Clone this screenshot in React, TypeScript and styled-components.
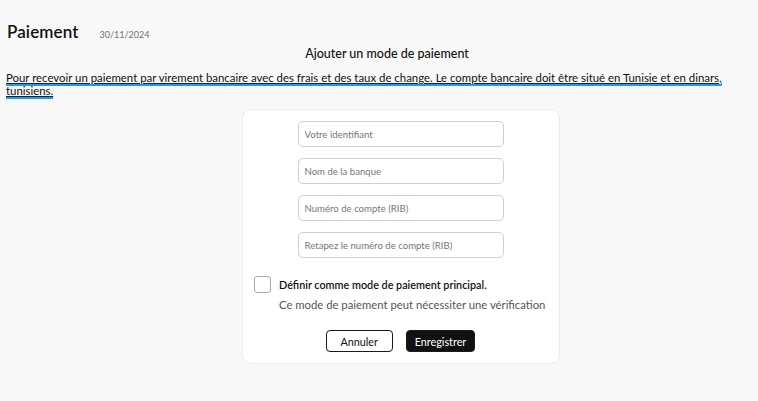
import React from "react";
import styled, { createGlobalStyle } from "styled-components";

const GlobalStyle = createGlobalStyle`
  html, body { margin: 0; padding: 0; }
  body {
    background: #f8f8f8;
    font-family: "Lato", "Noto Sans", sans-serif;
    color: #111;
  }
`;

const Page = styled.div`
  display: flex;
  flex-direction: column;
  padding: 3px 6px 0 6px;
  min-height: 398px;
  box-sizing: border-box;
`;

const Header = styled.div`
  display: flex;
  align-items: baseline;
  gap: 21px;
  padding: 18px 0 0 1px;
`;

const Title = styled.h1`
  margin: 0;
  font-size: 17px;
  font-weight: 600;
  letter-spacing: 0.1px;
`;

const DateText = styled.span`
  font-size: 9px;
  color: #707070;
`;

const Subtitle = styled.h2`
  margin: 4px 0 0 0;
  padding-left: 16px;
  text-align: center;
  font-size: 12.5px;
  font-weight: 500;
`;

const Intro = styled.p`
  margin: 10px 0 0 0;
  max-width: 727px;
  font-size: 11.4px;
  line-height: 13px;
`;

const Underlined = styled.span`
  text-decoration: underline;
  text-decoration-color: #222;
  text-decoration-thickness: 1px;
  text-underline-offset: 1px;
  border-bottom: 2px solid #1e9bf0;
`;

const Card = styled.div`
  align-self: center;
  margin: 12px 0 0 44px;
  width: 318px;
  box-sizing: border-box;
  background: #fff;
  border: 1px solid #ececec;
  border-radius: 9px;
  padding: 11px 12px 11px 11px;
  display: flex;
  flex-direction: column;
`;

const Fields = styled.div`
  display: flex;
  flex-direction: column;
  align-items: center;
  gap: 11px;
`;

const Input = styled.input`
  width: 206px;
  height: 26px;
  box-sizing: border-box;
  border: 1px solid #cfcfcf;
  border-radius: 5px;
  background: #fff;
  padding: 0 6px;
  font-family: inherit;
  font-size: 9.6px;
  outline: none;
  &::placeholder { color: #777; }
`;

const CheckRow = styled.div`
  display: flex;
  align-items: flex-start;
  gap: 8px;
  margin-top: 18px;
`;

const Box = styled.span`
  width: 17px;
  height: 17px;
  box-sizing: border-box;
  border: 1px solid #aaa;
  border-radius: 3px;
  flex: none;
`;

const CheckText = styled.div`
  display: flex;
  flex-direction: column;
  gap: 7px;
  padding-top: 2px;
`;

const CheckLabel = styled.span`
  font-size: 10.8px;
  font-weight: 600;
`;

const CheckHint = styled.span`
  font-size: 11.3px;
  color: #555;
`;

const Actions = styled.div`
  display: flex;
  justify-content: center;
  gap: 13px;
  margin-top: 19px;
`;

const Button = styled.button<{ $primary?: boolean }>`
  height: 22px;
  min-width: 67px;
  padding: 0 8px;
  border-radius: 4px;
  border: 1px solid #1a1a1a;
  background: ${(p) => (p.$primary ? "#111" : "#fff")};
  color: ${(p) => (p.$primary ? "#fff" : "#111")};
  font-family: inherit;
  font-size: 10.8px;
  cursor: pointer;
`;

export default function App() {
  return (
    <>
      <GlobalStyle />
      <Page>
        <Header>
          <Title>Paiement</Title>
          <DateText>30/11/2024</DateText>
        </Header>
        <Subtitle>Ajouter un mode de paiement</Subtitle>
        <Intro>
          <Underlined>
            Pour recevoir un paiement par virement bancaire avec des frais et des taux de change. Le compte
            bancaire doit être situé en Tunisie et en dinars, tunisiens.
          </Underlined>
        </Intro>
        <Card>
          <Fields>
            <Input placeholder="Votre identifiant" />
            <Input placeholder="Nom de la banque" />
            <Input placeholder="Numéro de compte (RIB)" />
            <Input placeholder="Retapez le numéro de compte (RIB)" />
          </Fields>
          <CheckRow>
            <Box />
            <CheckText>
              <CheckLabel>Définir comme mode de paiement principal.</CheckLabel>
              <CheckHint>Ce mode de paiement peut nécessiter une vérification</CheckHint>
            </CheckText>
          </CheckRow>
          <Actions>
            <Button>Annuler</Button>
            <Button $primary>Enregistrer</Button>
          </Actions>
        </Card>
      </Page>
    </>
  );
}
